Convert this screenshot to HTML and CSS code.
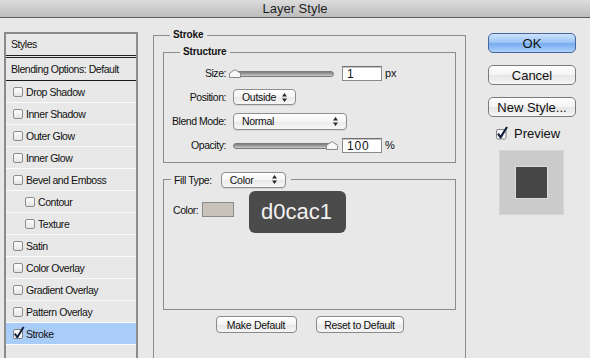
FILE: index.html
```html
<!DOCTYPE html>
<html>
<head>
<meta charset="utf-8">
<title>Layer Style</title>
<link rel="stylesheet" href="styles.css">
</head>
<body>
<div class="titlebar">Layer Style</div>
<div class="dialog">
  <div class="styles-panel">
    <div class="panel-head">Styles</div>
    <div class="panel-blend">Blending Options: Default</div>
    <ul class="fx-list">
      <li class="fx"><span class="cb"></span>Drop Shadow</li>
      <li class="fx"><span class="cb"></span>Inner Shadow</li>
      <li class="fx"><span class="cb"></span>Outer Glow</li>
      <li class="fx"><span class="cb"></span>Inner Glow</li>
      <li class="fx"><span class="cb"></span>Bevel and Emboss</li>
      <li class="fx sub"><span class="cb"></span>Contour</li>
      <li class="fx sub"><span class="cb"></span>Texture</li>
      <li class="fx"><span class="cb"></span>Satin</li>
      <li class="fx"><span class="cb"></span>Color Overlay</li>
      <li class="fx"><span class="cb"></span>Gradient Overlay</li>
      <li class="fx"><span class="cb"></span>Pattern Overlay</li>
      <li class="fx active"><svg class="cb-checked" width="10" height="10" viewBox="0 0 10 10"><rect x="0.5" y="0.5" width="9" height="9" rx="1.5" fill="#fafafa" stroke="#7f7f7f"/><path d="M1.8 4.6 L4.3 8.3 L10.6 -2" fill="none" stroke="#14223f" stroke-width="2" stroke-linejoin="round"/></svg>Stroke</li>
    </ul>
  </div>

  <div class="main">
    <fieldset class="group group-stroke">
      <legend class="legend">Stroke</legend>
      <fieldset class="group group-inner group-structure">
        <legend class="legend">Structure</legend>
        <div class="form-row">
          <span class="lbl">Size:</span>
          <div class="slider"><div class="track"></div><svg class="thumb thumb-min" width="12" height="9" viewBox="0 0 12 9"><path d="M0.5 8.5 V4.2 L6 0.6 L11.5 4.2 V8.5 Z" fill="#f7f7f7" stroke="#8a8a8a"/></svg></div>
          <div class="num-box">1</div><span class="unit">px</span>
        </div>
        <div class="form-row">
          <span class="lbl">Position:</span>
          <div class="select sel-position">Outside<svg class="arrows" width="5" height="9" viewBox="0 0 5 9"><path d="M0 3.6 L2.5 0 L5 3.6 Z M0 5.4 L2.5 9 L5 5.4 Z" fill="#2a2a2a"/></svg></div>
        </div>
        <div class="form-row">
          <span class="lbl">Blend Mode:</span>
          <div class="select sel-blend">Normal<svg class="arrows" width="5" height="9" viewBox="0 0 5 9"><path d="M0 3.6 L2.5 0 L5 3.6 Z M0 5.4 L2.5 9 L5 5.4 Z" fill="#2a2a2a"/></svg></div>
        </div>
        <div class="form-row">
          <span class="lbl">Opacity:</span>
          <div class="slider"><div class="track"></div><svg class="thumb thumb-max" width="12" height="9" viewBox="0 0 12 9"><path d="M0.5 8.5 V4.2 L6 0.6 L11.5 4.2 V8.5 Z" fill="#f7f7f7" stroke="#8a8a8a"/></svg></div>
          <div class="num-box">100</div><span class="unit">%</span>
        </div>
      </fieldset>

      <fieldset class="group group-inner group-fill">
        <legend class="fill-legend">Fill Type:<div class="select sel-fill">Color<svg class="arrows" width="5" height="9" viewBox="0 0 5 9"><path d="M0 3.6 L2.5 0 L5 3.6 Z M0 5.4 L2.5 9 L5 5.4 Z" fill="#2a2a2a"/></svg></div></legend>
        <div class="fill-body">
          <div class="color-row">
            <span class="color-lbl">Color:</span>
            <span class="swatch"></span>
            <div class="tooltip">d0cac1</div>
          </div>
        </div>
      </fieldset>

      <div class="btn-row">
        <button class="btn-small">Make Default</button>
        <button class="btn-small">Reset to Default</button>
      </div>
    </fieldset>
  </div>

  <div class="side">
    <button class="btn-big btn-ok">OK</button>
    <button class="btn-big">Cancel</button>
    <button class="btn-big btn-last">New Style...</button>
    <div class="preview-row">
      <svg class="preview-cb" width="11" height="11" viewBox="0 0 11 11"><rect x="0.5" y="1.5" width="9.5" height="9.5" rx="1.5" fill="#fafafa" stroke="#7f7f7f"/><path d="M2 5.6 L4.6 9.4 L11 -1" fill="none" stroke="#14223f" stroke-width="2.2" stroke-linejoin="round"/></svg>
      <span>Preview</span>
    </div>
    <div class="preview-box"><div class="preview-square"></div></div>
  </div>
</div>
</body>
</html>
```

FILE: styles.css
```css
html, body {
  margin: 0;
  padding: 0;
}
body {
  width: 590px;
  height: 358px;
  overflow: hidden;
  background: #e8e8e8;
  font-family: "Liberation Sans", Arial, sans-serif;
  font-size: 10.5px;
  color: #111;
}

.titlebar {
  height: 17px;
  border-bottom: 1px solid #5e5e5e;
  background: linear-gradient(#dcdcdc, #bcbcbc);
  text-align: center;
  font-size: 13px;
  line-height: 18px;
  color: #1e1e1e;
}

.dialog {
  display: flex;
  align-items: flex-start;
}

/* left styles panel */
.styles-panel {
  margin: 14px 0 0 4px;
  width: 134px;
  height: 326px;
  box-sizing: border-box;
  border: 2px solid #8b8b8b;
  border-bottom: none;
  letter-spacing: -0.45px;
}
.panel-head {
  height: 21px;
  line-height: 21px;
  padding-left: 5px;
  border-bottom: 3px double #222;
}
.panel-blend {
  height: 22px;
  line-height: 22px;
  padding-left: 5px;
  border-bottom: 1px solid #1a1a1a;
}
.fx-list {
  list-style: none;
  margin: 0;
  padding: 0;
}
.fx {
  height: 21px;
  border-bottom: 1px solid #fbfbfb;
  display: flex;
  align-items: center;
  padding-left: 7px;
}
.fx.sub {
  padding-left: 19px;
}
.fx.active {
  background: #a9ccf8;
}
.cb {
  width: 10px;
  height: 10px;
  box-sizing: border-box;
  border: 1px solid #8d8d8d;
  border-radius: 2px;
  background: linear-gradient(#fdfdfd, #e4e4e4);
  margin-right: 3px;
  flex: none;
}
.cb-checked {
  overflow: visible;
  margin-right: 3px;
  flex: none;
}

/* main */
.main {
  margin: 11px 0 0 15px;
}
.group {
  margin: 0;
  padding: 0;
  border: 1px solid #8c8c8c;
  min-inline-size: 0;
}
.group-stroke {
  width: 313px;
  height: 332px;
  box-sizing: border-box;
}
.group-inner {
  margin: 0 9px;
}
.legend {
  margin-left: 16px;
  padding: 0 3px;
  line-height: 12px;
  font-size: 10px;
  font-weight: bold;
  letter-spacing: -0.1px;
}
.group-structure {
  margin-top: 5px;
  padding: 3px 0 5px 0;
}
.form-row {
  display: flex;
  align-items: center;
  height: 24px;
  letter-spacing: -0.45px;
}
.lbl {
  width: 62px;
  text-align: right;
  margin-right: 7px;
  flex: none;
}
.slider {
  position: relative;
  width: 101px;
  height: 9px;
  margin-right: 8px;
  display: flex;
  align-items: center;
}
.track {
  width: 100%;
  height: 4px;
  margin-top: 2px;
  border-radius: 3px;
  border: 1px solid #7a7a7a;
  background: linear-gradient(#7d7d7d, #a9a9a9 60%, #cfcfcf);
}
.thumb {
  position: absolute;
  top: 0;
}
.thumb-min {
  left: -4px;
}
.thumb-max {
  right: -4px;
}
.num-box {
  width: 40px;
  height: 15px;
  box-sizing: border-box;
  border: 1px solid #8a8a8a;
  border-top-color: #6f6f6f;
  box-shadow: inset 0 1px 0 #c4c4c4;
  background: #fff;
  font-size: 12px;
  line-height: 14px;
  padding-left: 4px;
  letter-spacing: 0.8px;
}
.unit {
  margin-left: 3px;
  font-size: 11px;
  letter-spacing: 0;
}
.select {
  position: relative;
  height: 16px;
  box-sizing: border-box;
  border: 1px solid #8e8e8e;
  border-radius: 4px;
  background: linear-gradient(#ffffff, #f5f5f5 50%, #e9e9e9 51%, #f7f7f7);
  box-shadow: 0 1px 0 rgba(0,0,0,0.08);
  padding-left: 8px;
  display: flex;
  align-items: center;
  font-size: 10.5px;
  letter-spacing: -0.3px;
  font-weight: normal;
}
.arrows {
  position: absolute;
  right: 8px;
  top: 50%;
  margin-top: -4.5px;
}
.sel-position {
  width: 63px;
}
.sel-blend {
  width: 114px;
  height: 17px;
}
.sel-fill {
  width: 65px;
  margin-left: 9px;
}

.group-fill {
  margin-top: 8px;
  padding: 0;
}
.fill-legend {
  margin-left: 7px;
  padding: 0 5px 0 3px;
  display: flex;
  align-items: center;
  height: 17px;
  letter-spacing: -0.4px;
}
.fill-body {
  height: 121px;
  box-sizing: border-box;
  padding: 14px 0 0 9px;
}
.color-row {
  position: relative;
  display: flex;
  align-items: center;
  height: 15px;
  letter-spacing: -0.45px;
}
.color-lbl {
  margin-right: 4px;
}
.swatch {
  width: 32px;
  height: 15px;
  box-sizing: border-box;
  border: 1px solid #8a8a8a;
  background: #c9c2b9;
}
.tooltip {
  position: absolute;
  left: 76px;
  top: -11px;
  width: 97px;
  height: 42px;
  box-sizing: border-box;
  border-radius: 6px;
  background: #4b4b4b;
  color: #f2f2f2;
  font-size: 22px;
  line-height: 42px;
  padding-left: 12px;
  letter-spacing: 0;
}

.btn-row {
  display: flex;
  justify-content: center;
  gap: 19px;
  margin-top: 6px;
}
.btn-small {
  height: 17px;
  box-sizing: border-box;
  border: 1px solid #8a8a8a;
  border-radius: 4px;
  background: linear-gradient(#ffffff, #f4f4f4 50%, #e6e6e6 51%, #f5f5f5);
  font-family: "Liberation Sans", Arial, sans-serif;
  font-size: 10.5px;
  letter-spacing: -0.3px;
  color: #111;
  padding: 0;
  margin: 0;
}
.btn-row .btn-small:first-child {
  width: 81px;
}
.btn-row .btn-small:last-child {
  width: 88px;
}

/* side */
.side {
  margin: 15px 0 0 22px;
  width: 88px;
  display: flex;
  flex-direction: column;
}
.btn-big {
  height: 20px;
  box-sizing: border-box;
  border: 1px solid #7b7b7b;
  border-radius: 5px;
  background: linear-gradient(#ffffff, #f3f3f3 50%, #e5e5e5 51%, #f6f6f6);
  font-family: "Liberation Sans", Arial, sans-serif;
  font-size: 13px;
  color: #111;
  padding: 0;
  margin: 0 0 12px 0;
}
.btn-ok {
  border-color: #46679b;
  background: linear-gradient(#cde1fb, #99c2f5 50%, #74aaf0 51%, #acd0fa);
}
.btn-last {
  margin-bottom: 10px;
}
.preview-row {
  display: flex;
  align-items: center;
  height: 13px;
  margin-left: 8px;
  font-size: 13px;
}
.preview-cb {
  overflow: visible;
  margin-right: 7px;
  flex: none;
}
.preview-box {
  margin: 10px 0 0 11px;
  width: 65px;
  height: 65px;
  box-sizing: border-box;
  background: #cbcbcb;
  border: 1px solid #d6d6d6;
  display: flex;
  align-items: center;
  justify-content: center;
}
.preview-square {
  width: 33px;
  height: 33px;
  box-sizing: border-box;
  background: #464646;
  border: 1px solid #dcdcdc;
}
```
